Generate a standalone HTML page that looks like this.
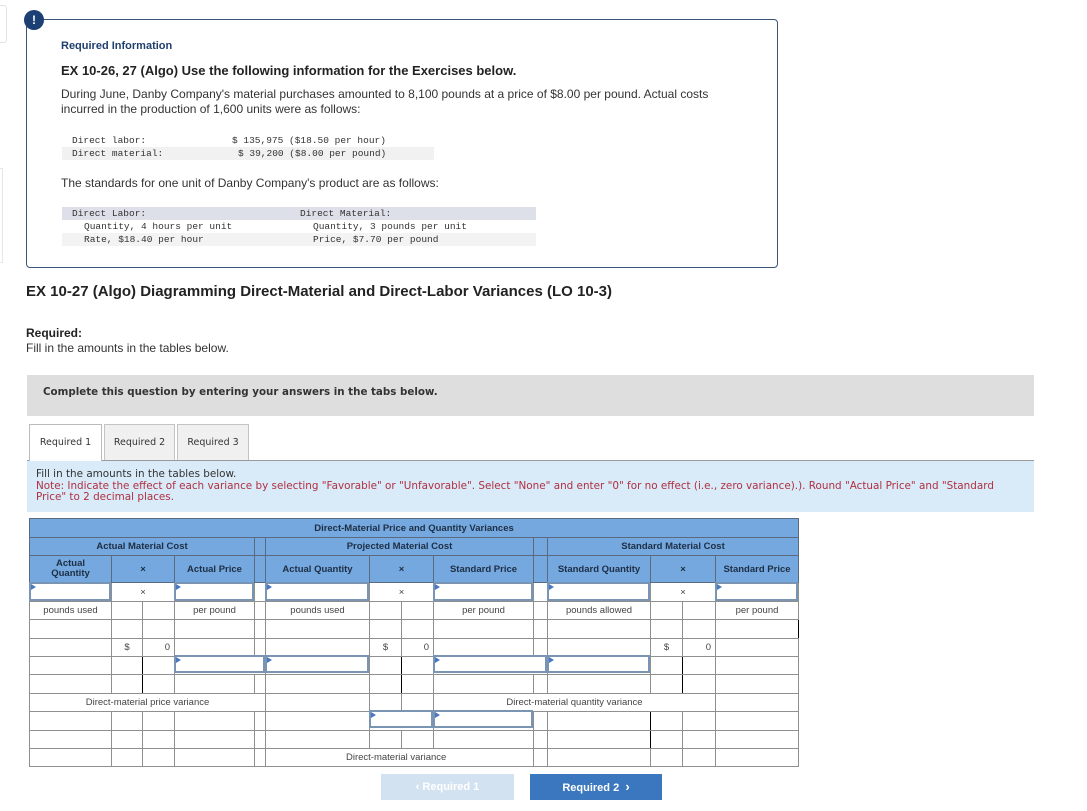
<!DOCTYPE html>
<html><head><meta charset="utf-8"><style>
*{margin:0;padding:0;box-sizing:border-box}
body{width:1087px;height:811px;background:#fff;position:relative;font-family:"Liberation Sans",Arial,sans-serif;color:#333;overflow:hidden}
.a{position:absolute;white-space:nowrap}
.mono{font-family:"Liberation Mono",monospace;font-size:9.5px;color:#333}
table{position:absolute;left:29px;top:518px;border-collapse:collapse;table-layout:fixed;font-family:"Liberation Sans",Arial,sans-serif;font-size:9.5px;color:#444}
td{border:1px solid #8f8f8f;text-align:center;height:18.4px;padding:0;overflow:hidden;white-space:nowrap}
tr.h td{background:#74a8df;font-weight:bold;color:#1e2e44;border-color:#5a6a80}
.inp{position:absolute;border:2px solid #7a94b4;background:#fff}
.inp:before{content:"";position:absolute;left:0;top:0;border-left:5px solid #4a78c0;border-top:3px solid transparent;border-bottom:3px solid transparent}
</style></head><body>
<div class="a" style="left:-5px;top:5px;width:12px;height:38px;border:1px solid #e2e2e2;border-radius:3px"></div>
<div class="a" style="left:-5px;top:168px;width:8px;height:95px;border:1px solid #e6e6e6"></div>
<div class="a" style="left:26px;top:19px;width:752px;height:249px;border:1px solid #3a5578;border-radius:4px"></div>
<div class="a" style="left:24px;top:10px;width:20px;height:20px;border-radius:50%;background:#1c3f74;color:#fff;font-weight:bold;font-size:12px;text-align:center;line-height:20px">!</div>
<div class="a" style="left:61px;top:40px;font-size:11px;font-weight:bold;color:#1f3f6e">Required Information</div>
<div class="a" style="left:61px;top:63px;font-size:13px;font-weight:bold;color:#222">EX 10-26, 27 (Algo) Use the following information for the Exercises below.</div>
<div class="a" style="left:61px;top:87px;font-size:12px;line-height:14.5px;color:#333">During June, Danby Company's material purchases amounted to 8,100 pounds at a price of $8.00 per pound. Actual costs<br>incurred in the production of 1,600 units were as follows:</div>
<div class="a" style="left:62px;top:147px;width:372px;height:13px;background:#f1f1f1"></div>
<div class="a mono" style="left:72px;top:135px">Direct labor:</div>
<div class="a mono" style="left:72px;top:148px">Direct material:</div>
<div class="a mono" style="left:232px;top:135px">$ 135,975 ($18.50 per hour)</div>
<div class="a mono" style="left:238px;top:148px">$ 39,200 ($8.00 per pound)</div>
<div class="a" style="left:61px;top:176px;font-size:12px;color:#333">The standards for one unit of Danby Company's product are as follows:</div>
<div class="a" style="left:62px;top:207px;width:474px;height:13px;background:#dde0e8"></div>
<div class="a" style="left:62px;top:233px;width:474px;height:13px;background:#f3f3f3"></div>
<div class="a mono" style="left:72px;top:208px">Direct Labor:</div>
<div class="a mono" style="left:84px;top:221px">Quantity, 4 hours per unit</div>
<div class="a mono" style="left:84px;top:234px">Rate, $18.40 per hour</div>
<div class="a mono" style="left:300px;top:208px">Direct Material:</div>
<div class="a mono" style="left:313px;top:221px">Quantity, 3 pounds per unit</div>
<div class="a mono" style="left:313px;top:234px">Price, $7.70 per pound</div>

<div class="a" style="left:26px;top:283px;font-size:15px;font-weight:bold;color:#222">EX 10-27 (Algo) Diagramming Direct-Material and Direct-Labor Variances (LO 10-3)</div>
<div class="a" style="left:26px;top:326px;font-size:12px;font-weight:bold;color:#222">Required:</div>
<div class="a" style="left:26px;top:341px;font-size:12px;color:#333">Fill in the amounts in the tables below.</div>

<div class="a" style="left:27px;top:375px;width:1007px;height:41px;background:#dedede"></div>
<div class="a" style="left:43px;top:386px;font-family:'DejaVu Sans',sans-serif;font-size:10.3px;font-weight:bold;color:#333">Complete this question by entering your answers in the tabs below.</div>

<div class="a" style="left:27px;top:460px;width:1007px;height:52px;background:#d9eaf8;border-top:1px solid #999"></div>
<div class="a" style="left:29px;top:424px;width:73px;height:37px;background:#fff;border:1px solid #bbb;border-bottom:none;font-family:'DejaVu Sans',sans-serif;font-size:9.5px;text-align:center;line-height:36px">Required 1</div>
<div class="a" style="left:104px;top:424px;width:71px;height:36px;background:#f0f0f0;border:1px solid #c4c4c4;border-bottom:none;font-family:'DejaVu Sans',sans-serif;font-size:9.5px;text-align:center;line-height:36px">Required 2</div>
<div class="a" style="left:177px;top:424px;width:72px;height:36px;background:#f0f0f0;border:1px solid #c4c4c4;border-bottom:none;font-family:'DejaVu Sans',sans-serif;font-size:9.5px;text-align:center;line-height:36px">Required 3</div>
<div class="a" style="left:36px;top:469px;font-family:'DejaVu Sans',sans-serif;font-size:10.4px;line-height:11.5px;color:#333">Fill in the amounts in the tables below.<br><span style="color:#b03040">Note: Indicate the effect of each variance by selecting "Favorable" or "Unfavorable". Select "None" and enter "0" for no effect (i.e., zero variance).). Round "Actual Price" and "Standard<br>Price" to 2 decimal places.</span></div>

<table>
<colgroup><col style="width:82px"><col style="width:31px"><col style="width:32px"><col style="width:80px"><col style="width:11px"><col style="width:104px"><col style="width:32px"><col style="width:32px"><col style="width:100px"><col style="width:14px"><col style="width:103px"><col style="width:32px"><col style="width:33px"><col style="width:83px"></colgroup>
<tr class="h"><td colspan="14" style="height:19px">Direct-Material Price and Quantity Variances</td></tr>
<tr class="h"><td colspan="4" style="height:18px">Actual Material Cost</td><td></td><td colspan="4">Projected Material Cost</td><td></td><td colspan="4">Standard Material Cost</td></tr>
<tr class="h"><td style="height:27px;line-height:10px">Actual<br>Quantity</td><td colspan="2">×</td><td>Actual Price</td><td></td><td>Actual Quantity</td><td colspan="2">×</td><td>Standard Price</td><td></td><td>Standard Quantity</td><td colspan="2">×</td><td>Standard Price</td></tr>
<tr><td></td><td colspan="2">×</td><td></td><td></td><td></td><td colspan="2">×</td><td></td><td></td><td></td><td colspan="2">×</td><td></td></tr>
<tr><td>pounds used</td><td></td><td></td><td>per pound</td><td></td><td>pounds used</td><td></td><td></td><td>per pound</td><td></td><td>pounds allowed</td><td></td><td></td><td>per pound</td></tr>
<tr><td></td><td></td><td></td><td></td><td style="border-left:1px solid #000"></td><td style="border-left:1px solid #000"></td><td></td><td></td><td></td><td style="border-left:1px solid #000"></td><td></td><td></td><td></td><td style="border-right:1px solid #000"></td></tr>
<tr><td style="border-top:1px solid #000"></td><td style="border-top:1px solid #000">$</td><td style="border-top:1px solid #000;text-align:right;padding-right:4px">0</td><td style="border-top:1px solid #000"></td><td style="border-top:1px solid #000"></td><td style="border-top:1px solid #000"></td><td style="border-top:1px solid #000">$</td><td style="border-top:1px solid #000;text-align:right;padding-right:4px">0</td><td style="border-top:1px solid #000"></td><td style="border-top:1px solid #000"></td><td style="border-top:1px solid #000"></td><td style="border-top:1px solid #000">$</td><td style="border-top:1px solid #000;text-align:right;padding-right:4px">0</td><td style="border-top:1px solid #000"></td></tr>
<tr><td></td><td style="border-right:1px solid #000"></td><td></td><td colspan="2"></td><td></td><td style="border-right:1px solid #000"></td><td></td><td colspan="2"></td><td></td><td style="border-right:1px solid #000"></td><td></td><td></td></tr>
<tr><td></td><td style="border-right:1px solid #000"></td><td></td><td></td><td></td><td></td><td style="border-right:1px solid #000"></td><td></td><td></td><td></td><td></td><td style="border-right:1px solid #000"></td><td></td><td></td></tr>
<tr><td colspan="5" style="border-top:1px solid #000">Direct-material price variance</td><td style="border-top:1px solid #000"></td><td></td><td></td><td colspan="5" style="border-top:1px solid #000">Direct-material quantity variance</td><td></td></tr>
<tr><td></td><td></td><td></td><td style="border-left:1px solid #000"></td><td></td><td></td><td colspan="2"></td><td></td><td></td><td style="border-right:1px solid #000"></td><td></td><td></td><td></td></tr>
<tr><td></td><td></td><td></td><td style="border-left:1px solid #000"></td><td></td><td></td><td></td><td></td><td></td><td></td><td style="border-right:1px solid #000"></td><td></td><td></td><td></td></tr>
<tr><td></td><td></td><td></td><td></td><td></td><td colspan="4" style="border-top:1px solid #000;text-align:left;padding-left:80px">Direct-material variance</td><td></td><td></td><td></td><td></td><td></td></tr>
</table>

<div class="inp" style="left:29px;top:582px;width:82px;height:19px"></div>
<div class="inp" style="left:174px;top:582px;width:80px;height:19px"></div>
<div class="inp" style="left:265px;top:582px;width:104px;height:19px"></div>
<div class="inp" style="left:433px;top:582px;width:100px;height:19px"></div>
<div class="inp" style="left:547px;top:582px;width:103px;height:19px"></div>
<div class="inp" style="left:715px;top:582px;width:83px;height:19px"></div>
<div class="inp" style="left:174px;top:655px;width:91px;height:18px"></div>
<div class="inp" style="left:265px;top:655px;width:104px;height:18px"></div>
<div class="inp" style="left:433px;top:655px;width:114px;height:18px"></div>
<div class="inp" style="left:547px;top:655px;width:103px;height:18px"></div>
<div class="inp" style="left:369px;top:710px;width:64px;height:18px"></div>
<div class="inp" style="left:433px;top:710px;width:100px;height:18px"></div>

<div class="a" style="left:381px;top:774px;width:133px;height:26px;background:#d3e2f1;color:#fff;font-size:11px;font-weight:bold;text-align:center;line-height:26px">&lsaquo; Required 1</div>
<div class="a" style="left:530px;top:774px;width:132px;height:26px;background:#3a77be;color:#fff;font-size:11px;font-weight:bold;text-align:center;line-height:26px">Required 2 &nbsp;<span style="font-size:13px">&rsaquo;</span></div>
</body></html>
